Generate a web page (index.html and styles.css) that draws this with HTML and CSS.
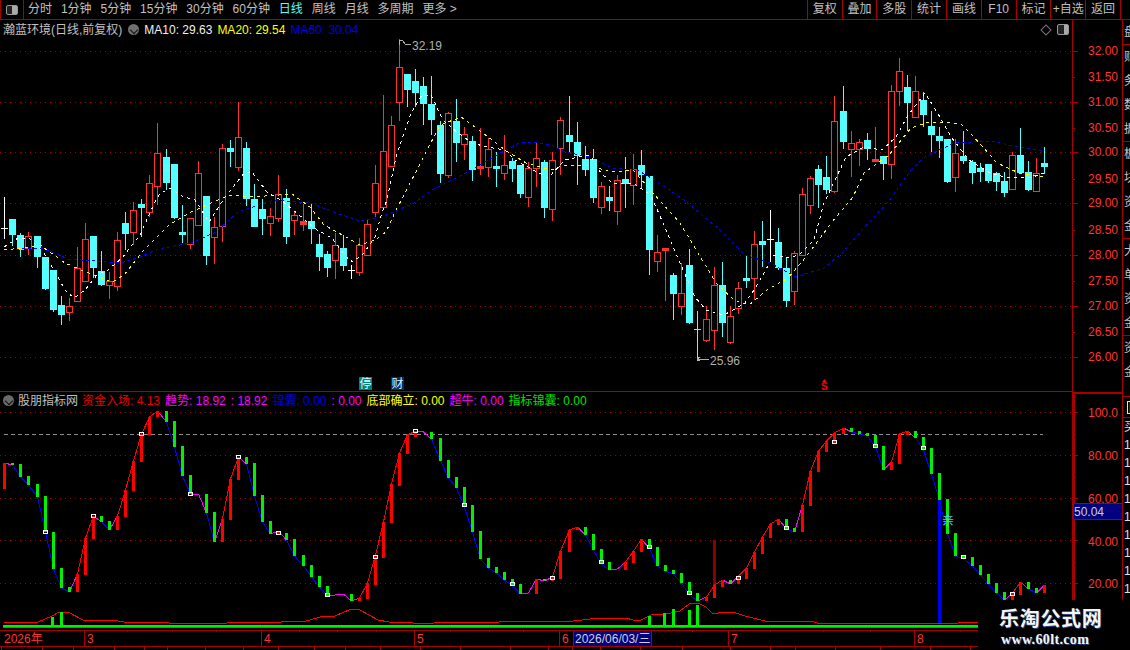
FILE: index.html
```html
<!DOCTYPE html>
<html lang="zh-CN">
<head>
<meta charset="utf-8">
<title>瀚蓝环境 日线</title>
<link rel="stylesheet" href="styles.css">
</head>
<body>
<div class="app">
  <header class="toolbar">
    <div class="toolbar-toggle"><span class="panel-icon"></span></div>
    <nav class="tabs">
      <span class="tab">分时</span><span class="tab">1分钟</span><span class="tab">5分钟</span><span class="tab">15分钟</span><span class="tab">30分钟</span><span class="tab">60分钟</span><span class="tab tab-active">日线</span><span class="tab">周线</span><span class="tab">月线</span><span class="tab">多周期</span><span class="tab">更多 &gt;</span>
    </nav>
    <nav class="actions">
      <span class="action">复权</span><span class="action">叠加</span><span class="action">多股</span><span class="action">统计</span><span class="action">画线</span><span class="action">F10</span><span class="action">标记</span><span class="action">+自选</span><span class="action">返回</span>
    </nav>
  </header>
  <div class="workspace">
    <div class="charts">
      <section class="pane pane-main">
        <svg id="main" class="plot" viewBox="0 20 1072 371" width="1072" height="371"></svg>
        <div class="legend">
          <span class="stock">瀚蓝环境(日线,前复权)</span>
          <span class="chevron chevron-main"></span>
          <span class="c-white">MA10: 29.63</span>
          <span class="c-yellow">MA20: 29.54</span>
          <span class="c-blue">MA60: 30.04</span>
          <span class="pane-tools"><span class="diamond"></span><span class="panel-icon"></span></span>
        </div>
      </section>
      <section class="pane pane-ind">
        <svg id="ind" class="plot" viewBox="0 392 1072 238" width="1072" height="238"></svg>
        <div class="legend legend-ind">
          <span class="chevron"></span>
          <span class="stock">股朋指标网</span>
          <span class="c-red">资金入场: 4.13</span>
          <span class="c-magenta">趋势: 18.92</span>
          <span class="c-magenta">: 18.92</span>
          <span class="c-blue">锦囊: 0.00</span>
          <span class="c-magenta">: 0.00</span>
          <span class="c-yellow">底部确立: 0.00</span>
          <span class="c-magenta">超牛: 0.00</span>
          <span class="c-green">指标锦囊: 0.00</span>
        </div>
      </section>
      <svg id="dates" class="date-axis" viewBox="0 630 1072 20" width="1072" height="20"></svg>
    </div>
    <div class="axes">
      <svg id="axis-main" class="axis" viewBox="1073 20 50 372" width="50" height="372"></svg>
      <svg id="axis-ind" class="axis" viewBox="1073 392 50 208" width="50" height="208"></svg>
    </div>
    <aside class="strip">
      <div class="strip-cell strip-short"><span>盘</span></div>
      <div class="strip-cell"><span>财</span><span>务</span><span>数</span><span>据</span></div>
      <div class="strip-cell"><span>板</span><span>块</span><span>资</span><span>金</span></div>
      <div class="strip-cell"><span>大</span><span>单</span><span>资</span><span>金</span></div>
      <div class="strip-cell strip-mid"><span>资</span><span>金</span></div>
      <div class="strip-cell strip-flag"><span class="strip-box">目</span></div>
      <div class="strip-cell strip-nums"><span>买</span><span>1</span><span>1</span><span>1</span><span>1</span><span>1</span><span>1</span><span>1</span><span>1</span><span>1</span></div>
    </aside>
  </div>
  <div class="watermark">
    <div class="wm-title">乐淘公式网</div>
    <div class="wm-url">www.60lt.com</div>
  </div>
</div>
<script src="chart.js"></script>
</body>
</html>
```
FILE: styles.css
```css
* { box-sizing: border-box; }
html, body { margin: 0; padding: 0; background: #000; }
body {
  width: 1130px; height: 650px; overflow: hidden;
  font: 12px/16px "Liberation Sans", "Noto Sans CJK SC", sans-serif;
  color: #c0c0c0;
}
.app { position: relative; width: 1130px; height: 650px; display: flex; flex-direction: column; overflow: hidden; background: #000; }

.toolbar { height: 20px; display: flex; align-items: stretch; border-bottom: 1px solid #a80000; flex: none; }
.toolbar-toggle { width: 24px; border: 1px solid #a80000; border-top: 0; border-bottom: 0; display: flex; align-items: center; justify-content: center; }
.panel-icon { display: block; width: 12px; height: 10px; border: 1px solid #999; border-radius: 2px; background: linear-gradient(90deg, #222 0 50%, #aaa 50% 100%); }
.tabs { display: flex; align-items: center; gap: 8.9px; padding-left: 4px; flex: 1; line-height: 19px; }
.tab { white-space: pre; }
.tab-active { color: #54ffff; }
.actions { display: flex; padding-right: 9px; }
.action { width: 34.8px; text-align: center; border-left: 1px solid #a80000; line-height: 19px; white-space: nowrap; }
.action:last-child { border-right: 1px solid #a80000; width: 35.8px; }

.workspace { flex: 1; display: flex; min-height: 0; }
.charts { width: 1073px; flex: none; border-right: 1px solid #a80000; display: flex; flex-direction: column; }
.pane { position: relative; flex: none; }
.pane-main { height: 372px; border-bottom: 1px solid #a80000; }
.pane-ind { height: 238px; }
.plot { position: absolute; left: 0; top: 0; display: block; }
.date-axis { display: block; flex: none; }

.legend { position: relative; display: flex; align-items: center; gap: 5px; padding: 1px 0 0 3px; height: 18px; white-space: nowrap; }
.legend-ind { padding: 0 0 0 3px; height: 17px; margin-top: 0; }
.legend .stock { color: #c0c0c0; }
.legend-ind .c-red { margin-left: -1px; }
.chevron { position: relative; display: block; width: 12px; height: 12px; border-radius: 50%; background: #6a6a6a; flex: none; }
.chevron::after { content: ""; position: absolute; left: 3px; top: 2.5px; width: 5px; height: 5px; border-right: 1px solid #111; border-bottom: 1px solid #111; transform: rotate(45deg); }
.chevron-main { margin: 0 0 0 1px; width: 11px; height: 11px; background: #707070; }
.legend-ind .chevron { width: 11px; height: 11px; margin-left: 0; margin-right: -1px; }
.c-white { color: #f0f0f0; }
.c-yellow { color: #ffff00; }
.c-blue { color: #0000e0; }
.c-red { color: #e80000; }
.c-magenta { color: #ff00ff; }
.c-green { color: #00e000; }
.pane-tools { display: flex; align-items: center; gap: 6px; margin-left: auto; padding-right: 3px; }
.pane-tools .panel-icon { width: 12px; height: 11px; background: linear-gradient(90deg, #222 0 60%, #aaa 60% 100%); }
.diamond { display: block; width: 8px; height: 8px; border: 1px solid #777; transform: rotate(45deg); margin-right: 1px; }

.axes { width: 50px; flex: none; display: flex; flex-direction: column; }
.axis { display: block; flex: none; }
.strip { width: 7px; flex: none; height: 580px; overflow: hidden; display: flex; flex-direction: column; font-size: 12px; line-height: 24px; color: #c8c8c8; }
.strip-cell { height: 97px; border-bottom: 1px solid #a80000; display: flex; flex-direction: column; flex: none; overflow: hidden; padding-left: 1px; }
.strip-cell span { display: block; height: 24px; flex: none; white-space: nowrap; }
.strip-short { height: 25px; }
.strip-mid { height: 61px; }
.strip-flag { height: 21px; padding-left: 4px; }
.strip-flag .strip-box { width: 12px; height: 13px; line-height: 12px; border: 1px solid #ffff00; color: #ffff00; margin-top: 4px; }
.strip-nums { height: 182px; border-bottom: 0; line-height: 18px; padding-top: 0; }
.strip-nums span { height: 18px; color: #e0e0e0; }

.watermark { position: absolute; right: 0; bottom: 0; width: 152px; height: 50px; background: #000; color: #f4f4f4; text-align: left; padding: 7px 0 0 21px; }
.wm-title { font: bold 20px/22px "Noto Sans CJK SC", sans-serif; letter-spacing: 0.7px; text-shadow: 1px 1px 0 #2a3f78; }
.wm-url { font: bold 14px/14px "Liberation Serif", serif; letter-spacing: 0.35px; margin: 4px 0 0 2px; text-shadow: 1px 1px 0 #2a3f78; }

svg text { font-family: "Liberation Sans", "Noto Sans CJK SC", sans-serif; }
```
FILE: chart.js
```js
(function () {
  var NS = 'http://www.w3.org/2000/svg';
  var RED = '#ff3232', CYAN = '#54ffff', GRID = '#a00000', LINE = '#a80000';
  function el(parent, tag, attrs, text) {
    var n = document.createElementNS(NS, tag);
    for (var k in attrs) n.setAttribute(k, attrs[k]);
    if (text != null) n.textContent = text;
    parent.appendChild(n);
    return n;
  }
  function cx(i) { return Math.round(4.3 + 8.06 * i); }
  function rect(p, x, y, w, h, fill) { return el(p, 'rect', { x: x, y: y, width: w, height: h, fill: fill, 'shape-rendering': 'crispEdges' }); }
  function hline(p, x1, x2, y, color, dash) {
    var a = { x1: x1, x2: x2, y1: y + 0.5, y2: y + 0.5, stroke: color, 'shape-rendering': 'crispEdges' };
    if (dash) a['stroke-dasharray'] = dash;
    return el(p, 'line', a);
  }
  function vline(p, x, y1, y2, color, w) { return rect(p, x, y1, w || 1, y2 - y1, color); }
  function poly(p, pts, color, dash) {
    var a = { points: pts.map(function (q) { return q[0] + ',' + q[1]; }).join(' '), fill: 'none', stroke: color, 'shape-rendering': 'crispEdges' };
    if (dash) a['stroke-dasharray'] = dash;
    return el(p, 'polyline', a);
  }

  /* candles: type, body top, body bottom, high, low (screen y) */
  var candles = [
    ['w',228,228,197,239],['c',219,235,219,246],['c',235,250,233,257],['r',236,248,232,255],['c',236,257,236,268],
    ['c',257,289,257,290],['c',270,310,270,312],['c',305,315,296,325],['r',306,312,298,321],['r',268,301,247,301],
    ['r',239,281,223,281],['c',236,268,236,278],['c',271,285,251,286],['r',281,285,272,299],['r',240,286,232,291],
    ['c',223,234,212,250],['r',210,232,202,245],['c',204,208,199,237],['r',183,212,175,217],['r',153,186,123,205],
    ['c',157,183,149,190],['c',164,218,164,219],['c',232,233,205,243],['r',218,244,218,249],['r',173,225,161,226],
    ['c',196,256,196,265],['r',227,237,217,264],['r',148,226,144,242],['c',148,152,140,167],['r',137,167,102,171],
    ['c',148,199,142,206],['c',199,227,184,227],['c',209,219,199,235],['r',216,223,208,236],['r',194,218,175,222],
    ['c',198,237,189,244],['r',215,220,212,235],['r',221,224,204,231],['c',221,229,204,244],['c',244,257,234,271],
    ['c',254,268,251,277],['r',245,260,233,279],['c',248,266,235,271],['w',270,270,265,279],['r',245,272,238,276],
    ['r',224,255,220,255],['r',183,212,165,217],['r',151,207,95,207],['r',125,166,116,166],['r',67,102,39,121],
    ['c',74,90,74,107],['c',81,93,69,107],['c',86,104,77,125],['c',104,120,76,135],['c',125,174,121,183],
    ['r',113,175,112,178],['c',121,143,99,162],['r',134,144,127,160],['c',141,170,136,181],['r',166,166,128,175],
    ['r',149,167,138,177],['c',166,167,152,187],['r',165,173,135,180],['c',161,169,158,182],['c',165,194,165,198],
    ['r',168,197,162,207],['r',158,168,143,187],['c',162,208,160,218],['r',160,209,152,221],['r',120,148,117,175],
    ['c',135,142,96,152],['c',142,156,122,185],['c',159,170,146,176],['c',159,198,149,203],['r',186,207,182,214],
    ['c',197,201,186,211],['r',180,211,175,225],['c',179,184,157,208],['r',169,185,154,205],['c',165,175,150,188],
    ['c',176,250,176,275],['r',252,261,235,272],['R',248,250,248,301],['c',275,294,273,320],['r',293,306,263,315],
    ['c',265,323,249,324],['C',329,329,311,361],['r',319,340,306,342],['r',285,330,267,350],['c',285,323,262,337],
    ['r',316,342,306,344],['r',288,308,282,314],['c',278,280,255,288],['r',244,278,231,300],['c',241,244,221,267],
    ['w',239,239,210,261],['c',242,268,228,270],['c',268,301,257,307],['r',253,291,251,305],['r',194,255,188,255],
    ['r',178,205,176,214],['c',169,185,165,208],['c',177,190,156,194],['r',121,191,96,193],['c',111,142,86,149],
    ['r',143,149,131,177],['r',142,149,139,166],['c',140,149,133,160],['R',159,161,127,161],['c',156,164,156,180],
    ['r',91,164,85,179],['r',71,91,58,106],['c',87,103,75,131],['r',91,117,76,117],['c',100,115,92,127],
    ['c',126,135,111,152],['c',136,141,127,158],['c',139,182,139,183],['r',153,177,139,192],['c',156,161,131,164],
    ['c',162,173,160,184],['c',168,172,163,182],['c',164,181,164,183],['c',173,182,172,191],['c',181,193,172,197],
    ['r',155,189,152,189],['c',155,173,128,173],['c',172,190,161,191],['r',173,191,158,192],['c',163,166,147,174]
  ];

  var ma60 = [[4,250],[20,249],[40,248],[52,252],[68,259],[108,262],[124,262],[140,257],[158,249],[191,243],[216,232],[238,212],[274,200],[310,203],[342,215],[360,221],[382,217],[414,203],[432,190],[472,170],[497,155],[519,143],[533,142],[551,145],[565,152],[590,157],[612,168],[637,170],[655,180],[684,200],[720,230],[745,255],[770,263],[796,277],[824,268],[842,253],[871,220],[889,201],[911,170],[925,157],[954,143],[990,141],[1019,147],[1044,151]];
  var ma20 = [[4,250],[22,248],[40,245],[54,255],[65,263],[86,272],[112,282],[124,275],[144,250],[169,225],[191,212],[209,204],[230,195],[252,197],[292,194],[310,207],[324,225],[346,237],[360,245],[375,240],[386,232],[396,210],[404,195],[422,160],[440,125],[461,117],[483,133],[505,150],[526,163],[551,170],[565,165],[583,165],[615,172],[633,170],[648,187],[659,200],[680,223],[698,253],[716,283],[734,300],[749,305],[767,290],[788,278],[806,257],[832,222],[853,197],[864,173],[889,155],[911,128],[929,122],[940,122],[961,124],[972,135],[983,147],[997,163],[1019,173],[1044,177]];
  var ma10 = [[4,247],[18,238],[29,238],[43,252],[54,270],[65,290],[74,298],[85,290],[97,275],[108,270],[122,258],[140,235],[155,202],[159,195],[169,188],[184,197],[195,200],[209,222],[225,197],[245,172],[252,172],[267,192],[281,200],[317,230],[332,238],[346,257],[353,262],[364,253],[375,237],[382,213],[387,200],[396,157],[411,113],[422,95],[431,95],[443,120],[458,133],[472,143],[487,147],[505,150],[515,160],[548,178],[565,160],[579,157],[590,155],[601,173],[612,183],[633,183],[648,193],[653,200],[669,237],[680,263],[695,297],[706,310],[724,315],[745,303],[756,287],[774,255],[788,258],[799,255],[814,240],[824,203],[846,157],[864,147],[882,150],[896,137],[907,117],[925,93],[940,117],[951,137],[969,160],[990,173],[1008,178],[1033,177],[1044,173]];

  /* oscillator sticks: colour, top, bottom in 3x crop units (y = 425 + v / 3) */
  var sticks = [
    ['r',115,192],['g',113,120],['g',117,156],['g',153,180],['g',177,215],['g',213,320],['g',321,432],['g',429,489],['g',486,501],['r',447,501],
    ['r',339,450],['r',273,342],['g',273,291],['g',288,315],['r',273,315],['r',195,276],['r',108,198],['r',27,111],['r',-24,30],['r',-42,-24],
    ['g',-42,-9],['g',-12,66],['g',63,153],['g',150,207],['m',207,207],['g',207,264],['g',261,351],['r',282,351],['r',162,285],['r',96,165],
    ['g',96,117],['g',114,213],['g',210,291],['g',288,327],['r',318,330],['g',324,345],['g',342,393],['g',390,423],['g',420,456],['g',453,486],
    ['g',483,513],['m',511,511],['m',508,508],['g',507,528],['r',518,528],['r',475,522],['r',390,480],['r',291,399],['r',178,294],['r',84,183],
    ['r',30,87],['r',17,36],['m',22,22],['g',21,42],['g',39,108],['g',105,159],['g',156,190],['g',186,246],['g',240,321],['g',318,402],
    ['g',399,429],['g',426,444],['g',441,465],['g',462,483],['g',477,507],['m',505,505],['r',463,507],['g',462,468],['r',455,468],['r',378,462],
    ['r',315,381],['r',306,315],['g',306,330],['g',327,375],['g',372,417],['g',411,435],['m',433,433],['r',411,435],['r',378,414],['r',342,381],
    ['g',342,372],['g',366,423],['g',420,438],['g',435,447],['g',444,474],['g',471,510],['g',504,528],['r',516,528],['r',480,519],['r',465,486],
    ['g',465,477],['r',453,477],['r',429,462],['r',381,432],['r',336,387],['r',297,339],['r',282,300],['g',282,312],['g',309,321],['r',240,321],
    ['r',138,243],['r',78,141],['r',48,81],['r',24,57],['r',10,27],['g',9,21],['g',18,27],['g',24,33],['g',30,66],['g',63,135],
    ['r',112,135],['r',27,117],['r',18,30],['g',18,39],['g',36,75],['g',69,147],['g',144,225],['g',222,327],['g',324,393],['g',390,402],
    ['g',396,423],['g',420,450],['g',447,477],['g',474,504],['g',501,525],['r',504,525],['r',471,510],['g',471,492],['g',489,504],['r',480,504]
  ];
  var marks = [[5,320],[11,273],[17,27],[23,207],[29,96],[34,324],[40,510],[46,396],[51,19],[57,240],[63,477],[68,459],[74,410],[80,365],[85,503],[91,458],[97,308],[103,52],[108,62],[114,68],[119,396],[125,507]];
  function zy(v) { return Math.round(425 + v / 3); }

  /* activity curve at the foot of the indicator pane */
  var left = [[12,592],[105,592],[145,572],[165,562],[190,562],[230,586],[310,586],[360,595],[430,592],[470,595],[630,595],[670,592],[780,592],[850,589],[900,574],[930,574],[975,553],[1000,556],[1050,586],[1080,592],[1140,592],[1145,595],[1205,595],[1210,592],[1385,592],[1390,589],[1550,589]];
  var right = [[0,592],[70,583],[110,580],[170,580],[190,586],[210,586],[240,571],[280,568],[320,559],[345,538],[370,535],[390,545],[412,567],[440,562],[465,562],[500,574],[555,589],[630,589],[690,592],[700,595],[1090,595],[1100,592],[1145,592]];
  var flow = left.map(function (q) { return [Math.round(q[0] / 2.775), zy(q[1])]; })
    .concat(right.map(function (q) { return [Math.round(565 + q[0] / 2.775), zy(q[1])]; }));

  /* ---------- price pane ---------- */
  var m = document.getElementById('main');
  [51, 102, 152, 203, 255, 306, 357].forEach(function (y) { hline(m, 0, 1072, y, GRID, '1 4'); });
  candles.forEach(function (c, i) {
    var x = cx(i), t = c[0].toLowerCase(), color = t === 'r' ? RED : t === 'c' ? CYAN : '#fff';
    vline(m, x, c[3], c[4], color);
    var flat = c[2] - c[1] < 4;
    if (t === 'r' && !flat) {
      el(m, 'rect', { x: x - 2.5, y: c[1] + 0.5, width: 6, height: c[2] - c[1], fill: '#000', stroke: color, 'shape-rendering': 'crispEdges' });
    } else if (t === 'w' || c[0] === 'C') {
      rect(m, x - 3, c[1], 7, 1, color);
    } else {
      rect(m, x - 3, c[1], 7, Math.max(c[2] - c[1], 2) + (flat ? 1 : 0), color);
    }
  });
  poly(m, ma60, '#0000ff', '3 3');
  poly(m, ma20, '#ffff00', '3 4');
  poly(m, ma10, '#ffffff', '3 4');
  /* high / low annotations */
  poly(m, [[399, 45], [399, 40], [403, 41], [405, 44], [411, 45]], '#b0b0b0');
  el(m, 'text', { x: 412, y: 50, fill: '#b0b0b0', 'font-size': 12 }, '32.19');
  poly(m, [[700, 357], [697, 359], [700, 361]], '#b0b0b0');
  hline(m, 697, 709, 359, '#b0b0b0');
  el(m, 'text', { x: 710, y: 365, fill: '#b0b0b0', 'font-size': 12 }, '25.96');
  /* event flags */
  rect(m, 359, 377, 13, 13, '#008080');
  el(m, 'text', { x: 359.5, y: 388, fill: '#d8ffff', 'font-size': 12 }, '停');
  rect(m, 391, 377, 13, 13, '#003060');
  el(m, 'text', { x: 391.5, y: 388, fill: '#d8f0ff', 'font-size': 12 }, '财');
  el(m, 'polygon', { points: '824.5,379 822,382 827,382', fill: '#ff0000' });
  el(m, 'text', { x: 821, y: 390, fill: '#ff0000', 'font-size': 10, 'font-weight': 'bold' }, 'S');

  /* ---------- indicator pane ---------- */
  var p = document.getElementById('ind');
  [412, 455, 498, 540, 583].forEach(function (y) { hline(p, 0, 1072, y, GRID, '1 4'); });
  hline(p, 4, 1043, 434, '#8c8c8c', '4 3');
  vline(p, 713, 540, 597, '#8b0000', 3);
  vline(p, 938, 500, 623, '#0000f0', 3);
  poly(p, flow, '#ff0000');
  [[145, 575], [168, 561]].forEach(function (b) { rect(p, Math.round(b[0] / 2.775) - 1, zy(b[1]), 3, 625 - zy(b[1]), '#00f000'); });
  [[232, 573], [276, 564], [300, 552], [345, 555], [367, 540]].forEach(function (b) { rect(p, Math.round(565 + b[0] / 2.775) - 1, zy(b[1]), 3, 625 - zy(b[1]), '#00f000'); });
  rect(p, 3, 625, 975, 2, '#00f000');
  rect(p, 3, 627, 975, 1, '#ff00ff');
  var prev = null, prevPt = null;
  sticks.forEach(function (s, i) {
    var x = cx(i), y = s[0] === 'g' ? zy(s[2]) : zy(s[1]);
    if (prevPt) {
      var col = s[0] === 'r' ? '#ff0000' : s[0] === 'g' ? '#0000ff' : '#ff00ff';
      if (prev && prev !== s[0]) col = '#ff00ff';
      poly(p, [[prevPt[0] + 0.5, prevPt[1]], [x + 0.5, y]], col);
    }
    prev = s[0]; prevPt = [x, y];
  });
  sticks.forEach(function (s, i) {
    if (s[0] === 'm') return;
    var x = cx(i);
    rect(p, x - 1, zy(s[1]), 3, Math.max(zy(s[2]) - zy(s[1]), 2), s[0] === 'r' ? '#ff0000' : '#00f000');
  });
  marks.forEach(function (k) {
    el(p, 'rect', { x: cx(k[0]) - 1.5, y: zy(k[1]) - 1.5, width: 4, height: 3, fill: 'none', stroke: '#fff', 'shape-rendering': 'crispEdges' });
  });
  el(p, 'text', { x: 942, y: 525, fill: '#54c8ff', 'font-size': 12 }, '亲');

  /* ---------- date axis ---------- */
  var d = document.getElementById('dates');
  hline(d, 0, 978, 630, LINE);
  hline(d, 0, 978, 646, LINE);
  [84, 261, 414, 559, 728, 914].forEach(function (x) { vline(d, x, 630, 646, LINE); });
  [127, 172, 216, 299, 337, 376, 450, 489, 523, 602, 640, 692, 770, 823, 870, 960].forEach(function (x) { vline(d, x, 630, 632, LINE); });
  [1, 42, 73, 114, 144, 167, 205, 243, 278, 314, 345, 380, 420, 460, 510, 548, 572, 600, 640, 682, 730, 770, 795, 835, 880, 930, 970].forEach(function (x) { vline(d, x, 646, 650, LINE); });
  [['2026年', 4], ['3', 87], ['4', 264], ['5', 417], ['6', 562], ['7', 731], ['8', 917]].forEach(function (t) {
    el(d, 'text', { x: t[1], y: 643, fill: RED, 'font-size': 12 }, t[0]);
  });
  el(d, 'rect', { x: 573.5, y: 630.5, width: 78, height: 16, fill: '#000080', stroke: LINE, 'shape-rendering': 'crispEdges' });
  el(d, 'text', { x: 575, y: 643, fill: '#d0d0d0', 'font-size': 12 }, '2026/06/03/三');

  /* ---------- axes ---------- */
  var a = document.getElementById('axis-main');
  vline(a, 1122, 20, 392, LINE);
  [['32.00', 51], ['31.50', 77], ['31.00', 102], ['30.50', 128], ['30.00', 152], ['29.50', 179], ['29.00', 203], ['28.50', 230], ['28.00', 255], ['27.50', 281], ['27.00', 306], ['26.50', 332], ['26.00', 357]].forEach(function (t, i) {
    rect(a, 1073, t[1], i % 2 ? 2 : 5, 1, LINE);
    el(a, 'text', { x: 1088, y: t[1] + 4, fill: RED, 'font-size': 12 }, t[0]);
  });
  var b = document.getElementById('axis-ind');
  rect(b, 1073, 392, 50, 2, LINE);
  vline(b, 1073, 392, 600, LINE, 2);
  vline(b, 1122, 392, 600, LINE, 1);
  [412, 455, 498, 540, 583].forEach(function (y) { rect(b, 1074, y, 4, 1, LINE); });
  [434, 477, 519, 562].forEach(function (y) { rect(b, 1074, y, 2, 1, LINE); });
  [['100.0', 412], ['80.00', 455], ['60.00', 498], ['40.00', 541], ['20.00', 583]].forEach(function (t) {
    el(b, 'text', { x: 1088, y: t[1] + 5, fill: RED, 'font-size': 12 }, t[0]);
  });
  rect(b, 1074, 503, 48, 17, LINE);
  rect(b, 1074, 504, 48, 15, '#000080');
  el(b, 'text', { x: 1074, y: 516, fill: '#d0d0d0', 'font-size': 12 }, '50.04');
})();
```
